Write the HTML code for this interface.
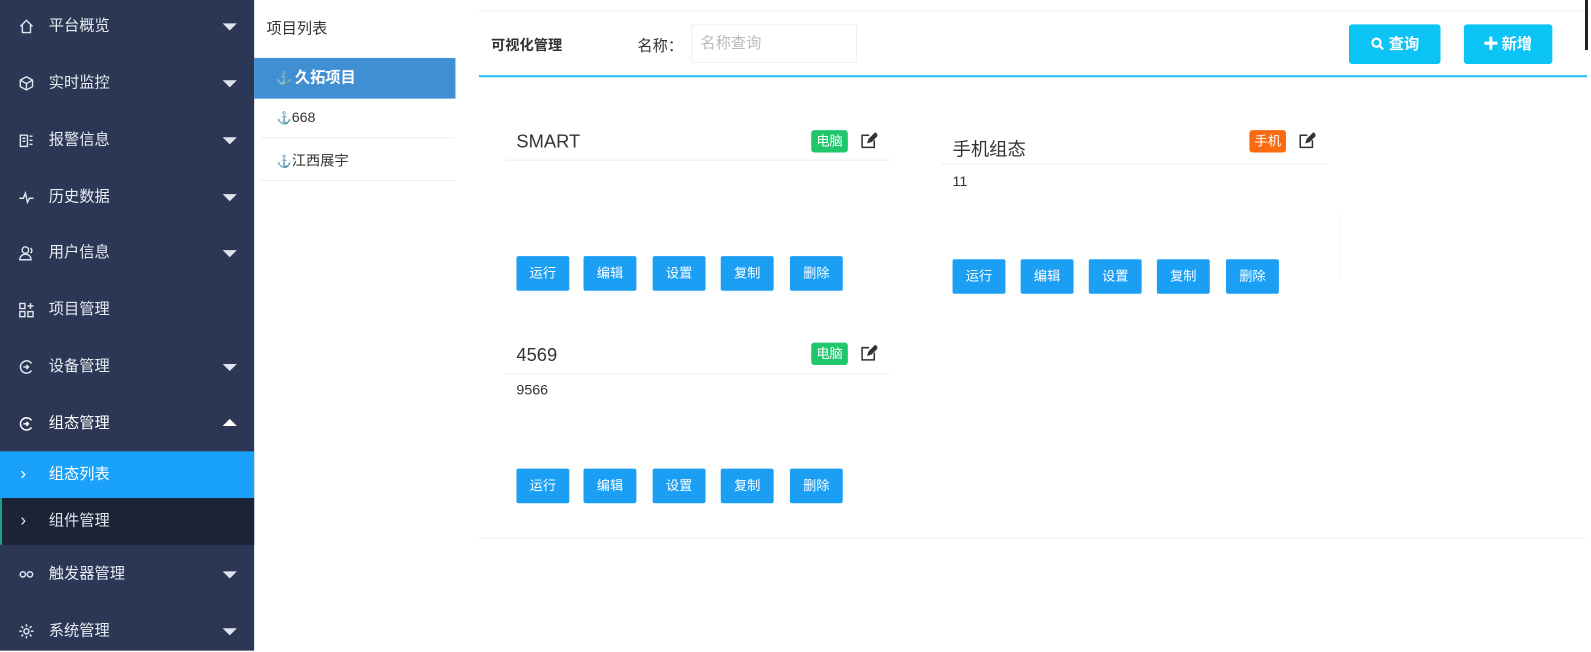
<!DOCTYPE html>
<html><head><meta charset="utf-8"><style>
*{margin:0;padding:0;box-sizing:border-box}
body{width:1591px;height:640px;position:relative;overflow:hidden;background:#fff;font-family:"Liberation Sans","Noto Sans CJK SC",sans-serif;}
#w{position:absolute;left:0;top:0;width:1565px;height:630px;transform:scale(1.0166);transform-origin:0 0}
.a{position:absolute}
#sb{left:0;top:0;width:250px;height:640px;background:#2b3754}
.mi{position:absolute;left:0;width:250px;height:40px;color:#e8ecf3;font-size:15px;line-height:40px}
.mi .ic{position:absolute;left:18px;top:12px;width:16px;height:16px}
.mi .t{position:absolute;left:48px}
.mi .ar{position:absolute;left:219px;top:17px;width:0;height:0;border-left:7px solid transparent;border-right:7px solid transparent;border-top:7px solid #dfe4ee}
.mi .up{border-top:none;border-bottom:7px solid #fff}
.btn{position:absolute;width:52px;height:34px;background:#1a9ff5;border-radius:2px;color:#fff;font-size:13px;line-height:34px;text-align:center}
.badge{position:absolute;height:22px;border-radius:3px;color:#fff;font-size:13px;line-height:22px;padding:0 5px}
.ttl{position:absolute;font-size:18px;color:#333}
.hl{position:absolute;height:1px;background:#eee}
</style></head><body><div id="w">
<div id="sb" class="a">
<div class="mi" style="top:6px"><svg class="ic" viewBox="0 0 16 16" fill="none" stroke="#dfe4ee" stroke-width="1.4"><path d="M2 8L8 2l6 6M4 6.5V14h8V6.5"/></svg><span class="t">平台概览</span><i class="ar"></i></div>
<div class="mi" style="top:62px"><svg class="ic" viewBox="0 0 16 16" fill="none" stroke="#dfe4ee" stroke-width="1.4"><path d="M8 1.5l6 3.3v6.4L8 14.5 2 11.2V4.8zM2 4.8l6 3.4 6-3.4M8 8.2v6.3"/></svg><span class="t">实时监控</span><i class="ar"></i></div>
<div class="mi" style="top:118px"><svg class="ic" viewBox="0 0 16 16" fill="none" stroke="#dfe4ee" stroke-width="1.4"><path d="M2 3h7v11H2zM11 4h3M11 8h3M11 12h3M4 6h3M4 9h3"/></svg><span class="t">报警信息</span><i class="ar"></i></div>
<div class="mi" style="top:174px"><svg class="ic" viewBox="0 0 16 16" fill="none" stroke="#dfe4ee" stroke-width="1.4"><path d="M1 9h4l2-5 2 9 2-4h4"/></svg><span class="t">历史数据</span><i class="ar"></i></div>
<div class="mi" style="top:229px"><svg class="ic" viewBox="0 0 16 16" fill="none" stroke="#dfe4ee" stroke-width="1.4"><circle cx="7" cy="5" r="3.2"/><path d="M1.5 14.5c0-3.5 2.5-5.5 5.5-5.5s5.5 2 5.5 5.5zM12 3a3 3 0 010 5"/></svg><span class="t">用户信息</span><i class="ar"></i></div>
<div class="mi" style="top:285px"><svg class="ic" viewBox="0 0 16 16" fill="none" stroke="#dfe4ee" stroke-width="1.4"><rect x="1.5" y="1.5" width="5" height="5"/><rect x="1.5" y="9.5" width="5" height="5"/><rect x="9.5" y="9.5" width="5" height="5"/><path d="M12 1v6M9 4h6"/></svg><span class="t">项目管理</span></div>
<div class="mi" style="top:341px"><svg class="ic" viewBox="0 0 16 16" fill="none" stroke="#dfe4ee" stroke-width="1.5"><path d="M13 4.5A6 6 0 1013 11.5M5 8h5M8 6l2 2-2 2"/></svg><span class="t">设备管理</span><i class="ar"></i></div>
<div class="mi" style="top:397px;color:#fff"><svg class="ic" viewBox="0 0 16 16" fill="none" stroke="#fff" stroke-width="1.5"><path d="M13 4.5A6 6 0 1013 11.5M5 8h5M8 6l2 2-2 2"/></svg><span class="t">组态管理</span><i class="ar up" style="top:15px"></i></div>
<div class="a" style="left:0;top:444px;width:250px;height:46px;background:#1aa1fb;color:#fff;font-size:15px;line-height:46px"><span class="a" style="left:20px;top:-1px;font-size:17px">&#x203A;</span><span class="a" style="left:48px">组态列表</span></div>
<div class="a" style="left:0;top:490px;width:250px;height:46px;background:#1b2336;border-left:2px solid #1b9e8a;color:#e0e5ee;font-size:15px;line-height:46px"><span class="a" style="left:18px;top:-1px;font-size:17px">&#x203A;</span><span class="a" style="left:46px">组件管理</span></div>
<div class="mi" style="top:545px"><svg class="ic" viewBox="0 0 16 16" fill="none" stroke="#dfe4ee" stroke-width="1.5"><circle cx="4.5" cy="8" r="2.6"/><circle cx="11.5" cy="8" r="2.6"/></svg><span class="t">触发器管理</span><i class="ar"></i></div>
<div class="mi" style="top:601px"><svg class="ic" viewBox="0 0 16 16" fill="none" stroke="#dfe4ee" stroke-width="1.5"><circle cx="8" cy="8" r="2.5"/><path d="M8 1v2.5M8 12.5V15M1 8h2.5M12.5 8H15M3 3l1.8 1.8M11.2 11.2L13 13M3 13l1.8-1.8M11.2 4.8L13 3"/></svg><span class="t">系统管理</span><i class="ar"></i></div>
</div>

<div class="a" style="left:262px;top:17px;font-size:15px;color:#333">项目列表</div>
<div class="a" style="left:250px;top:57px;width:198px;height:40px;background:#3f8fd2;color:#fff;font-size:15px;font-weight:bold;line-height:40px;padding-left:40px">久拓项目<span class="a" style="left:21px;top:0;font-weight:normal;font-size:13px">&#x2693;</span></div>
<div class="a" style="left:272px;top:107px;font-size:14px;color:#333"><span style="font-size:12px;color:#555">&#x2693;</span>668</div>
<div class="hl" style="left:257px;top:135px;width:190px"></div>
<div class="a" style="left:272px;top:148px;font-size:14px;color:#333"><span style="font-size:12px;color:#555">&#x2693;</span>江西展宇</div>
<div class="hl" style="left:257px;top:177px;width:190px"></div>

<div class="hl" style="left:470px;top:10px;width:1090px;background:#f2f2f2"></div>
<div class="a" style="left:483px;top:34px;font-size:14px;font-weight:bold;color:#333">可视化管理</div>
<div class="a" style="left:627px;top:34px;font-size:15px;color:#333">名称：</div>
<div class="a" style="left:680px;top:24px;width:163px;height:38px;border:1px solid #f0f0f0;font-size:15px;color:#bbb;line-height:36px;padding-left:8px">名称查询</div>
<div class="a" style="left:1327px;top:24px;width:90px;height:39px;background:#0cc3f6;border-radius:3px;color:#fff;font-size:15px;font-weight:bold;line-height:39px;text-align:center"><svg width="14" height="14" viewBox="0 0 14 14" style="vertical-align:-2px" fill="none" stroke="#fff" stroke-width="2.2"><circle cx="6" cy="6" r="4"/><path d="M9 9l3.5 3.5"/></svg> 查询</div>
<div class="a" style="left:1440px;top:24px;width:87px;height:39px;background:#0cc3f6;border-radius:3px;color:#fff;font-size:15px;font-weight:bold;line-height:39px;text-align:center"><svg width="13" height="13" viewBox="0 0 13 13" style="vertical-align:-1px" fill="#fff"><path d="M5 0h3v5h5v3H8v5H5V8H0V5h5z"/></svg> 新增</div>
<div class="a" style="left:471px;top:74px;width:1090px;height:2px;background:#1ec0f5"></div>

<div class="ttl" style="left:508px;top:129px">SMART</div>
<div class="badge" style="left:798px;top:128px;background:#20c66c">电脑</div>
<div class="a" style="left:846px;top:130px;width:17px;height:17px"><svg width="17" height="17" viewBox="0 0 17 17" fill="none" stroke="#333" stroke-width="1.5"><path d="M9 3H2v12h12V8"/><path d="M8 10l1-3 6-6 2 2-6 6z" fill="#333"/></svg></div>
<div class="hl" style="left:496px;top:157px;width:380px"></div>
<div class="btn" style="left:508px;top:252px">运行</div><div class="btn" style="left:574px;top:252px">编辑</div><div class="btn" style="left:642px;top:252px">设置</div><div class="btn" style="left:709px;top:252px">复制</div><div class="btn" style="left:777px;top:252px">删除</div>

<div class="ttl" style="left:937px;top:133px">手机组态</div>
<div class="badge" style="left:1229px;top:128px;background:#fa6a10">手机</div>
<div class="a" style="left:1277px;top:130px;width:17px;height:17px"><svg width="17" height="17" viewBox="0 0 17 17" fill="none" stroke="#333" stroke-width="1.5"><path d="M9 3H2v12h12V8"/><path d="M8 10l1-3 6-6 2 2-6 6z" fill="#333"/></svg></div>
<div class="hl" style="left:926px;top:161px;width:380px"></div>
<div class="a" style="left:937px;top:170px;font-size:14px;color:#333">11</div>
<div class="a" style="left:1318px;top:210px;width:1px;height:65px;background:#f3f3f3"></div>
<div class="btn" style="left:937px;top:255px">运行</div><div class="btn" style="left:1004px;top:255px">编辑</div><div class="btn" style="left:1071px;top:255px">设置</div><div class="btn" style="left:1138px;top:255px">复制</div><div class="btn" style="left:1206px;top:255px">删除</div>

<div class="ttl" style="left:508px;top:339px">4569</div>
<div class="badge" style="left:798px;top:337px;background:#20c66c">电脑</div>
<div class="a" style="left:846px;top:339px;width:17px;height:17px"><svg width="17" height="17" viewBox="0 0 17 17" fill="none" stroke="#333" stroke-width="1.5"><path d="M9 3H2v12h12V8"/><path d="M8 10l1-3 6-6 2 2-6 6z" fill="#333"/></svg></div>
<div class="hl" style="left:496px;top:367px;width:380px"></div>
<div class="a" style="left:508px;top:375px;font-size:14px;color:#333">9566</div>
<div class="btn" style="left:508px;top:461px">运行</div><div class="btn" style="left:574px;top:461px">编辑</div><div class="btn" style="left:642px;top:461px">设置</div><div class="btn" style="left:709px;top:461px">复制</div><div class="btn" style="left:777px;top:461px">删除</div>

<div class="hl" style="left:470px;top:529px;width:1090px;background:#f0f0f0"></div>
</div>
<div class="a" style="left:1585px;top:0;width:3px;height:50px;background:#222"></div>
</body></html>
